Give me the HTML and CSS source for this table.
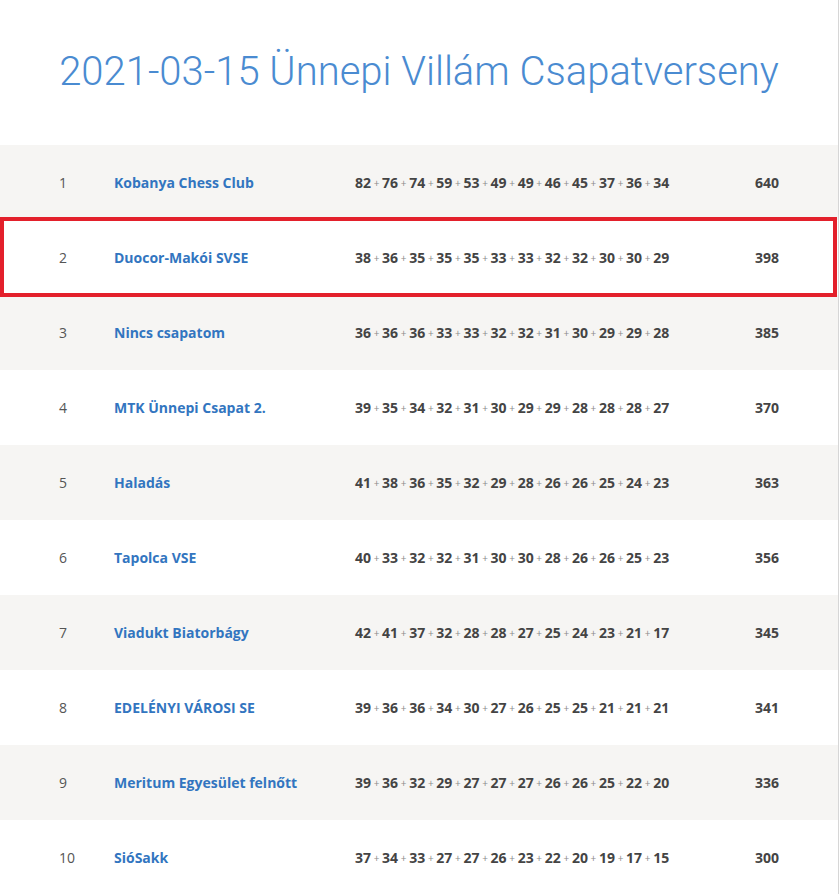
FILE: index.html
```html
<!DOCTYPE html>
<html lang="hu">

<head>
    <meta charset="UTF-8">
    <meta name="viewport" content="width=device-width, initial-scale=1.0">
    <title>2021-03-15 Ünnepi Villám Csapatverseny</title>
    <link rel="stylesheet" href="styles.css">
</head>

<body>
    <div class="page">
        <h1 class="title">2021-03-15 Ünnepi Villám Csapatverseny</h1>
        <div class="standings" id="standings"></div>
    </div>

    <script>
        const teams = [
            ["Kobanya Chess Club", [82, 76, 74, 59, 53, 49, 49, 46, 45, 37, 36, 34], 640],
            ["Duocor-Makói SVSE", [38, 36, 35, 35, 35, 33, 33, 32, 32, 30, 30, 29], 398],
            ["Nincs csapatom", [36, 36, 36, 33, 33, 32, 32, 31, 30, 29, 29, 28], 385],
            ["MTK Ünnepi Csapat 2.", [39, 35, 34, 32, 31, 30, 29, 29, 28, 28, 28, 27], 370],
            ["Haladás", [41, 38, 36, 35, 32, 29, 28, 26, 26, 25, 24, 23], 363],
            ["Tapolca VSE", [40, 33, 32, 32, 31, 30, 30, 28, 26, 26, 25, 23], 356],
            ["Viadukt Biatorbágy", [42, 41, 37, 32, 28, 28, 27, 25, 24, 23, 21, 17], 345],
            ["EDELÉNYI VÁROSI SE", [39, 36, 36, 34, 30, 27, 26, 25, 25, 21, 21, 21], 341],
            ["Meritum Egyesület felnőtt", [39, 36, 32, 29, 27, 27, 27, 26, 26, 25, 22, 20], 336],
            ["SióSakk", [37, 34, 33, 27, 27, 26, 23, 22, 20, 19, 17, 15], 300]
        ];

        let html = "";
        teams.forEach((team, i) => {
            let scores = team[1].map(s => "<b>" + s + "</b>").join('<span class="plus">+</span>');
            html += '<div class="row' + (i === 1 ? ' highlight' : '') + '">' +
                '<div class="rank">' + (i + 1) + '</div>' +
                '<div class="name"><a href="#">' + team[0] + '</a></div>' +
                '<div class="scores">' + scores + '</div>' +
                '<div class="total">' + team[2] + '</div>' +
                '</div>';
        });
        document.getElementById("standings").innerHTML = html;
    </script>
</body>

</html>
```

FILE: styles.css
```css
body {
    margin: 0;
    background-color: #fff;
    font-family: "Open Sans", Arial, sans-serif;
    font-size: 14px;
    color: #444;
}

.page {
    width: 838px;
    min-height: 894px;
    border-right: 1px solid #d6d6d6;
}

.title {
    margin: 0;
    height: 145px;
    box-sizing: border-box;
    padding-top: 47px;
    text-align: center;
    font-family: Roboto, "Liberation Sans", sans-serif;
    font-weight: 300;
    font-size: 40px;
    line-height: 50px;
    color: #4a8bd1;
}

.row {
    display: grid;
    grid-template-columns: 114px 241px 400px 1fr;
    align-items: center;
    height: 75px;
}

.row:nth-child(odd) {
    background-color: #f6f5f3;
}

.highlight {
    position: relative;
}

.highlight::after {
    content: "";
    position: absolute;
    left: 0;
    right: 1px;
    top: -3px;
    bottom: -2px;
    border: 4px solid #e3202b;
    pointer-events: none;
}

.rank {
    padding-left: 59px;
    color: #555;
}

.name a {
    color: #3275c0;
    font-weight: bold;
    text-decoration: none;
}

.scores b {
    color: #444;
}

.plus {
    font-size: 10px;
    color: #8a8a8a;
    margin: 0 2.7px;
    vertical-align: 1px;
}

.total {
    font-weight: bold;
    color: #444;
}
```
